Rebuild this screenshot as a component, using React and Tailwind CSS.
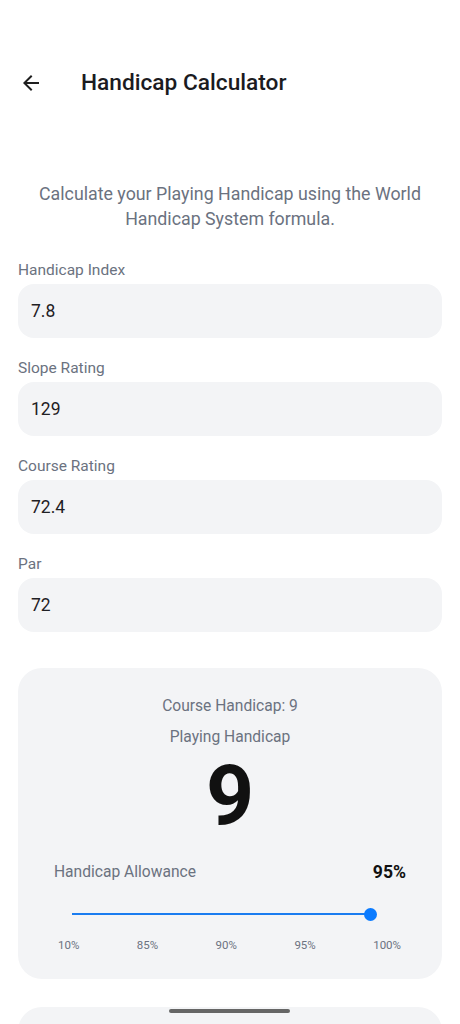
import React from "react";

const ticks = ["10%", "85%", "90%", "95%", "100%"];

const fields = [
  { label: "Handicap Index", value: "7.8" },
  { label: "Slope Rating", value: "129" },
  { label: "Course Rating", value: "72.4" },
  { label: "Par", value: "72" },
];

const Field = ({ label, value }) => {
  return (
    <div className="mb-[20px]">
      <div className="text-[15.5px] leading-[20px] text-[#6b7280] mb-[4px]">{label}</div>
      <div className="h-[54px] rounded-[16px] bg-[#f3f4f6] flex items-center px-[13px] text-[17.5px] text-[#1f2024]">
        {value}
      </div>
    </div>
  );
};

const App = () => {
  return (
    <div className="relative min-h-screen bg-white font-['Roboto','Liberation_Sans',sans-serif]">
      {/* header */}
      <div className="pt-[55px] h-[111px] flex items-center">
        <button className="ml-[19px] w-[24px] h-[24px] flex items-center justify-center text-[#1f1f1f]">
          <svg width="24" height="24" viewBox="0 0 24 24" fill="currentColor">
            <path d="M20 11H7.83l5.59-5.59L12 4l-8 8 8 8 1.41-1.41L7.83 13H20v-2z" />
          </svg>
        </button>
        <h1 className="ml-[38px] text-[22.7px] font-medium text-[#1b1b1f]">Handicap Calculator</h1>
      </div>

      <div className="px-[18px]">
        <p className="mt-[70px] text-center text-[17.8px] leading-[25px] text-[#6b7280]">
          Calculate your Playing Handicap using the World Handicap System formula.
        </p>

        <div className="mt-[29px]">
          {fields.map((f) => (
            <Field key={f.label} label={f.label} value={f.value} />
          ))}
        </div>

        {/* result card */}
        <div className="mt-[36px] rounded-[24px] bg-[#f3f4f6] pt-[28px] pb-[27px]">
          <div className="text-center text-[15.6px] leading-[20px] text-[#6b7280]">Course Handicap: 9</div>
          <div className="mt-[11px] text-center text-[15.6px] leading-[20px] text-[#6b7280]">Playing Handicap</div>
          <div className="mt-[7px] text-center text-[84px] leading-none font-bold text-[#111111]">9</div>
          <div className="mt-[23px] px-[36px] flex items-center justify-between">
            <span className="text-[15.6px] leading-[22px] text-[#6b7280]">Handicap Allowance</span>
            <span className="text-[17.6px] leading-[22px] font-bold text-[#111111]">95%</span>
          </div>
          <div className="mt-[24px] ml-[54px] mr-[65px] flex items-center h-[14px]">
            <div className="flex-1 h-[2px] bg-[#1a7cf0]"></div>
            <div className="w-[13px] h-[13px] -ml-[6px] rounded-full bg-[#0b7bff]"></div>
          </div>
          <div className="mt-[17px] pl-[40px] pr-[41px] flex justify-between text-[11.5px] leading-[14px] text-[#6b7280]">
            {ticks.map((t) => (
              <span key={t}>{t}</span>
            ))}
          </div>
        </div>

        <div className="mt-[28px] h-[120px] rounded-t-[24px] bg-[#f3f4f6]"></div>
      </div>

      {/* system home indicator */}
      <div className="fixed left-[169px] top-[1009px] w-[121px] h-[4px] rounded-full bg-[#666666]"></div>
    </div>
  );
};

export default App;
